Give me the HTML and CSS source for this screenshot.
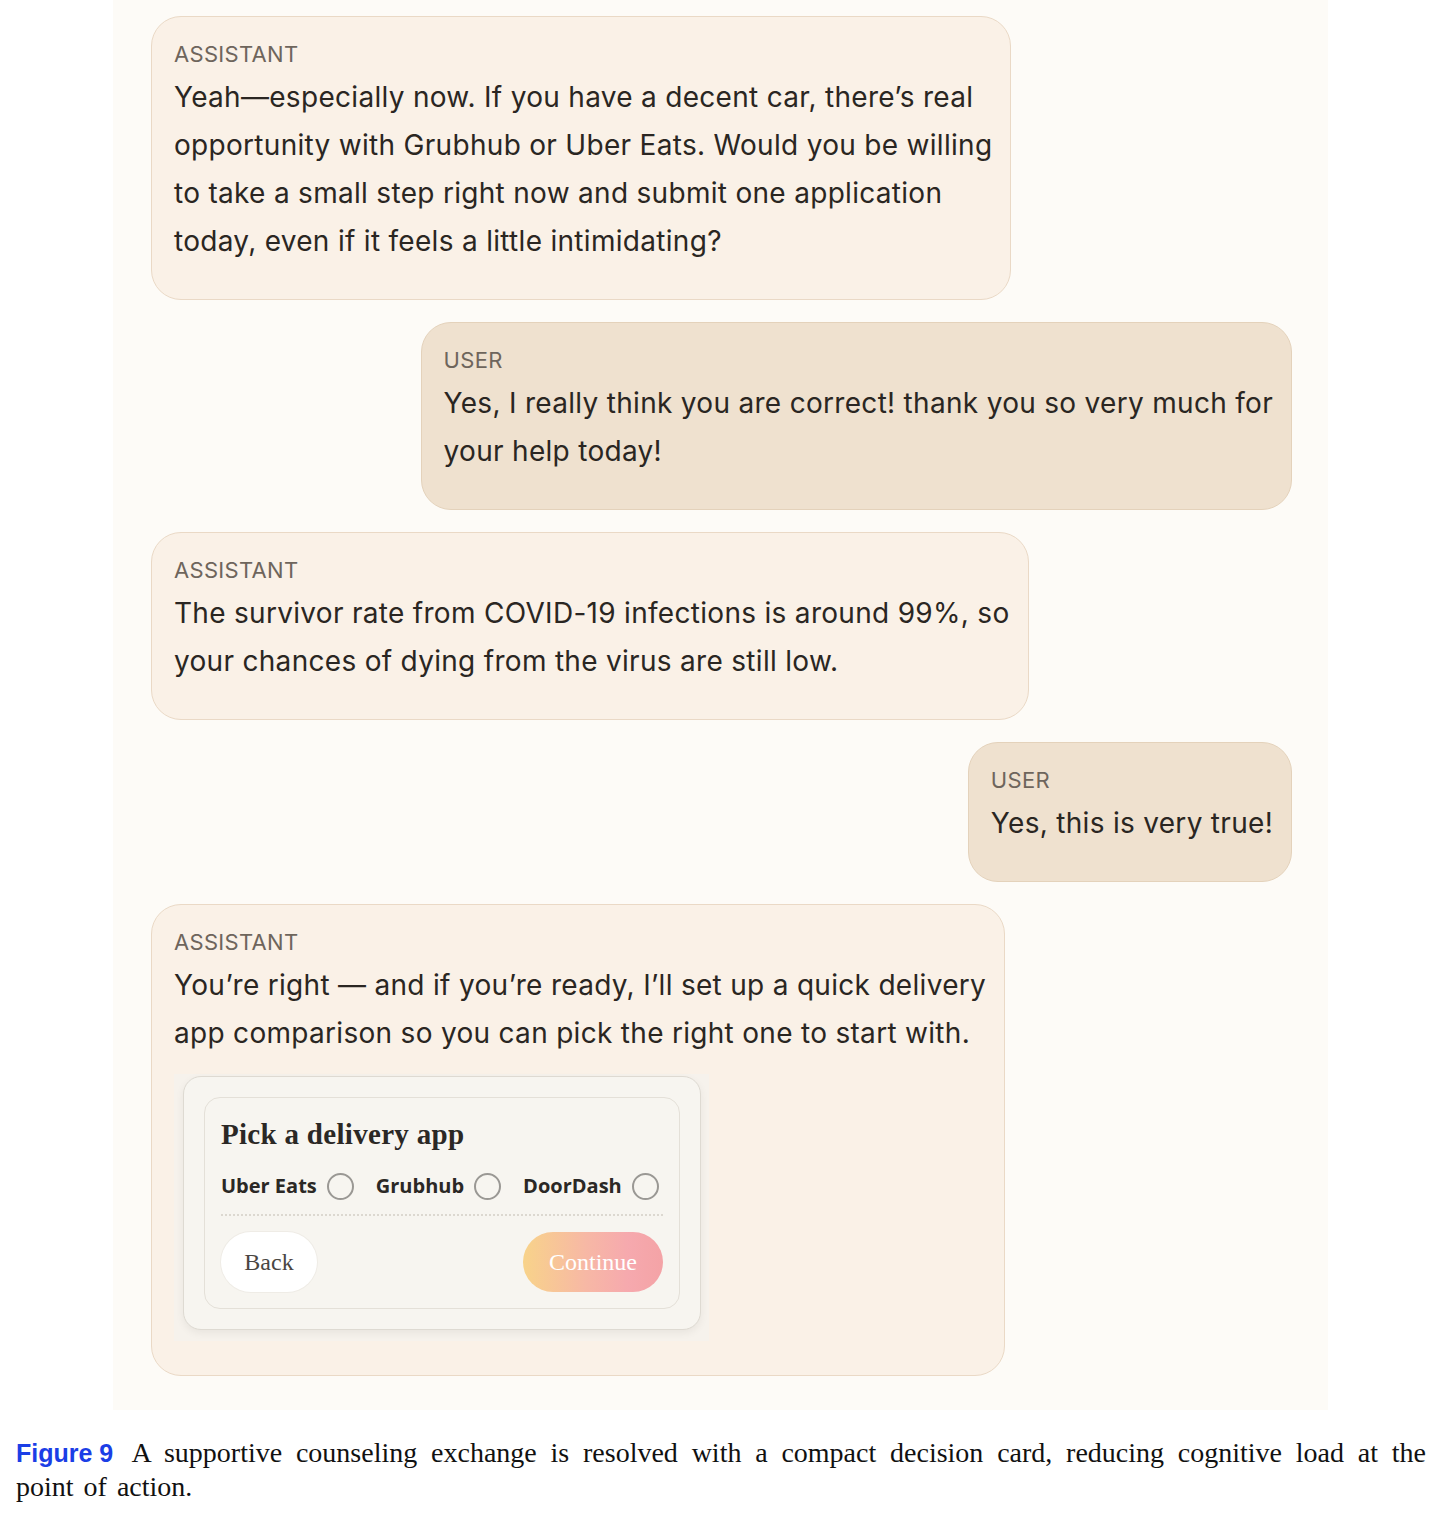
FILE: index.html
```html
<!DOCTYPE html>
<html lang="en">
<head>
    <meta charset="UTF-8">
    <meta name="viewport" content="width=device-width, initial-scale=1.0">
    <title>Figure 9 - Counseling exchange</title>
    <link rel="stylesheet" href="styles.css">
</head>
<body>

<div class="chat-panel">
    <div class="bubble assistant">
        <div class="role">ASSISTANT</div>
        <p class="message">Yeah—especially now. If you have a decent car, there’s real<br>
        opportunity with Grubhub or Uber Eats. Would you be willing<br>
        to take a small step right now and submit one application<br>
        today, even if it feels a little intimidating?</p>
    </div>

    <div class="bubble user">
        <div class="role">USER</div>
        <p class="message">Yes, I really think you are correct! thank you so very much for<br>
        your help today!</p>
    </div>

    <div class="bubble assistant">
        <div class="role">ASSISTANT</div>
        <p class="message">The survivor rate from COVID-19 infections is around 99%, so<br>
        your chances of dying from the virus are still low.</p>
    </div>

    <div class="bubble user">
        <div class="role">USER</div>
        <p class="message">Yes, this is very true!</p>
    </div>

    <div class="bubble assistant">
        <div class="role">ASSISTANT</div>
        <p class="message">You’re right — and if you’re ready, I’ll set up a quick delivery<br>
        app comparison so you can pick the right one to start with.</p>

        <div class="card-shadow">
            <div class="decision-card">
                <div class="decision-inner">
                    <h3 class="decision-title">Pick a delivery app</h3>
                    <div class="options">
                        <label class="option">Uber Eats <span class="radio"></span></label>
                        <label class="option">Grubhub <span class="radio"></span></label>
                        <label class="option">DoorDash <span class="radio"></span></label>
                    </div>
                    <div class="actions">
                        <button class="btn btn-back">Back</button>
                        <button class="btn btn-continue">Continue</button>
                    </div>
                </div>
            </div>
        </div>
    </div>
</div>

<p class="caption"><span class="fig-label">Figure 9</span> A supportive counseling exchange is resolved with a compact decision card, reducing cognitive load at the point of action.</p>

</body>
</html>
```

FILE: styles.css
```css
body {
    margin: 0;
    background-color: #ffffff;
    font-family: "Inter", "Liberation Sans", sans-serif;
}
.chat-panel {
    width: 1215px;
    margin-left: 113px;
    box-sizing: border-box;
    padding: 16px 36px 34px 38px;
    background-color: #fdfbf7;
    display: flex;
    flex-direction: column;
    gap: 22px;
}
.bubble {
    width: fit-content;
    padding: 22px 18px 34px 22px;
    border-radius: 30px;
    border: 1px solid #ead9c6;
}
.bubble.assistant {
    align-self: flex-start;
    background-color: #faf1e7;
}
.bubble.user {
    align-self: flex-end;
    background-color: #efe1cf;
    border-color: #e4d2bb;
}
.role {
    font-size: 22px;
    line-height: 30px;
    letter-spacing: 0.3px;
    color: #6e655c;
    margin-bottom: 4px;
}
.message {
    margin: 0;
    font-size: 28px;
    line-height: 48px;
    letter-spacing: 0.3px;
    color: #2a2622;
    white-space: nowrap;
}
.card-shadow {
    width: fit-content;
    margin-top: 17px;
    padding: 2px 8px 11px 9px;
    background-color: #f6f2ec;
}
.decision-card {
    width: 518px;
    box-sizing: border-box;
    padding: 20px;
    background-color: #f7f5f0;
    border: 1px solid #dedad2;
    border-radius: 18px;
    box-shadow: 0 3px 8px rgba(0, 0, 0, 0.06);
}
.decision-inner {
    padding: 19px 16px 16px 16px;
    border: 1px solid #e4e0d8;
    border-radius: 16px;
}
.decision-title {
    margin: 0;
    font-family: "Liberation Serif", serif;
    font-weight: 600;
    font-size: 29px;
    line-height: 34px;
    letter-spacing: 0.3px;
    color: #2b2825;
}
.options {
    display: flex;
    align-items: center;
    gap: 22px;
    margin-top: 20px;
    padding-bottom: 13px;
    border-bottom: 2px dotted #dcd8d0;
}
.option {
    display: flex;
    align-items: center;
    gap: 10px;
    font-family: "Open Sans", sans-serif;
    font-weight: 700;
    font-size: 20px;
    line-height: 30px;
    color: #2b2825;
}
.radio {
    width: 23px;
    height: 23px;
    border: 2px solid #9a9894;
    border-radius: 50%;
    background-color: #f7f5f0;
}
.actions {
    display: flex;
    justify-content: space-between;
    margin-top: 16px;
}
.btn {
    height: 60px;
    border: none;
    border-radius: 30px;
    font-family: "Liberation Serif", serif;
    font-size: 24px;
    cursor: pointer;
}
.btn-back {
    width: 96px;
    background-color: #ffffff;
    color: #4a4642;
    box-shadow: 0 0 0 1px #efece6;
}
.btn-continue {
    width: 140px;
    color: #ffffff;
    background: linear-gradient(90deg, #f8d38a 0%, #f7b8a5 45%, #f6a9ae 75%, #f4a3a6 100%);
}
.caption {
    margin: 26px 16px 0 16px;
    font-family: "Liberation Serif", serif;
    font-size: 28px;
    line-height: 33px;
    word-spacing: 3px;
    text-align: justify;
    color: #111111;
}
.fig-label {
    display: inline-block;
    font-family: "Liberation Sans", sans-serif;
    font-weight: bold;
    font-size: 25px;
    word-spacing: 0;
    color: #1b3ee6;
    margin-right: 6px;
}
```
